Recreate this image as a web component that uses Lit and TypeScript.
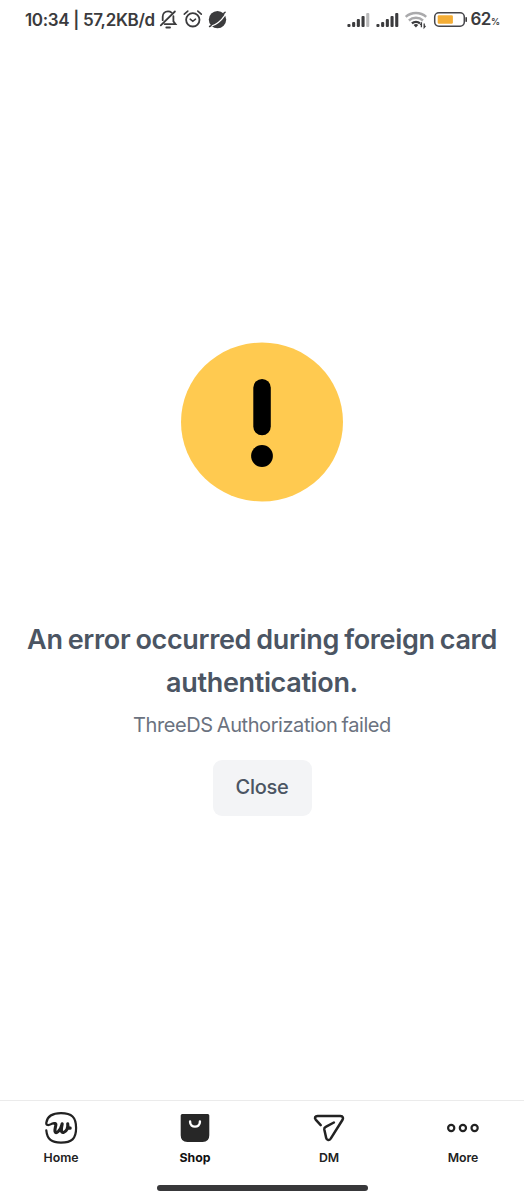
import { LitElement, html, css, svg } from "lit";
import { customElement, property } from "lit/decorators.js";

@customElement("status-bar")
class StatusBar extends LitElement {
  static styles = css`
    :host { display: flex; justify-content: space-between; height: 40px; padding: 0 25px; box-sizing: border-box; color: #3b3b3d; }
    .side { display: flex; align-items: center; height: 40px; }
    .clock { font-size: 17px; font-weight: 600; line-height: 40px; white-space: nowrap; width: 131px; letter-spacing: -0.34px; }
    svg { display: block; flex: none; }
    .pct { font-size: 17px; font-weight: 600; line-height: 40px; margin-left: 3.5px; white-space: nowrap; letter-spacing: -0.4px; }
    .sign { font-size: 9px; letter-spacing: -0.6px; }
    .right { margin-right: -0.5px; }
  `;
  private bars(dimLast: boolean) {
    const heights = [3, 5, 8, 11, 14];
    return svg`${heights.map(
      (h, i) => svg`<rect x=${0.4 + i * 4.7} y=${27 - h} width="3.1" height=${h} rx="1" fill=${dimLast && i === 4 ? "#b9b9ba" : "#3b3b3d"} />`
    )}`;
  }
  render() {
    return html`
      <div class="side">
        <span class="clock">10:34 | 57,2KB/d</span>
        <svg width="74" height="40" viewBox="156 0 74 40" fill="none" stroke="#3b3b3d" stroke-width="1.8" stroke-linecap="round">
          <path d="M171.600 12.600c-1-.8-2.200-1.200-3.600-1.200-3.200 0-5.300 2.200-5.300 5.400v3.400M173.400 16.200v5.200l2.100 2.700H164.600" />
          <path d="M160.800 25.300 174.900 11.500M166.300 27.500h3.700" />
          <circle cx="192.800" cy="19.800" r="6.700" />
          <path d="M190.200 19.200l2.600 2.100 2.700-2.100M184.300 14.200l3.500-3.100M201.300 14.200l-3.500-3.100" stroke-width="1.600" />
          <circle cx="217.500" cy="19.600" r="8.700" fill="#3b3b3d" stroke="none" />
          <path d="M211 26.300c5.200-1.600 10.300-5.700 14-11.200" stroke="#fff" stroke-width="1.200" />
          <path d="M209.600 26.500l1.500-.9M223.800 13.400l1.300-1.100" stroke-width="1.500" />
        </svg>
      </div>
      <div class="side right">
        <svg width="22.500" height="40" viewBox="0 0 22.500 40">${this.bars(true)}</svg>
        <svg width="34" height="40" viewBox="-6 0 34 40">${this.bars(false)}</svg>
        <svg width="63" height="40" viewBox="404 0 63 40" fill="none">
          <g stroke-width="2.400">
            <path d="M405.700 16.900c5.700-5.200 14.800-5.200 20.500 0" stroke="#aaaaac" />
            <path d="M408.900 20.500c4-3.600 10.100-3.600 14.100 0" stroke="#aaaaac" />
            <path d="M411.900 23.400c2.400-2 5.800-2 8.100 0" stroke="#3b3b3d" />
          </g>
          <path d="M413.600 25q2.400-1.800 4.700 0L415.900 27.500z" fill="#3b3b3d" />
          <path d="M421.400 27.300v-4l-1.200 1.500M424.200 23.500v4l1.300-1.600" stroke="#3b3b3d" stroke-width="1.300" />
          <rect x="434.700" y="12.700" width="29.600" height="13.600" rx="4.200" stroke="#45454a" stroke-width="1.500" />
          <rect x="437.700" y="15.300" width="15.200" height="8.400" rx="1.200" fill="#f4ad35" />
          <path d="M466.200 17.700v3.500" stroke="#3b3b3d" stroke-width="1.600" stroke-linecap="round" />
        </svg>
        <span class="pct">62<span class="sign">%</span></span>
      </div>
    `;
  }
}

@customElement("error-panel")
class ErrorPanel extends LitElement {
  static styles = css`
    :host { display: flex; flex-direction: column; align-items: center; padding-top: 302px; text-align: center; }
    .badge { display: block; width: 164px; height: 162px; margin-bottom: 114px; }
    h1 { margin: 0; font-size: 27px; font-weight: 600; line-height: 43px; color: #4b5563; white-space: nowrap; letter-spacing: -0.34px; word-spacing: -1.3px; }
    p { margin: 4px 0 17.5px; font-size: 20px; line-height: 34px; color: #6b7280; font-weight: 400; letter-spacing: -0.43px; word-spacing: -1px; white-space: nowrap; }
    button { width: 99px; height: 56px; padding: 0 0 1px; border: 0; border-radius: 9px; background: #f3f4f6; color: #4b5563; font: 500 20px Inter, sans-serif; letter-spacing: -0.25px; }
  `;
  render() {
    return html`
      <svg class="badge" viewBox="0 0 164 162">
        <ellipse cx="82" cy="80" rx="81" ry="79.500" fill="#ffca50" />
        <rect x="73.300" y="37" width="17.500" height="56.300" rx="8.750" fill="#000" />
        <circle cx="82" cy="114" r="10.900" fill="#000" />
      </svg>
      <h1>An error occurred during foreign card<br />authentication.</h1>
      <p>ThreeDS Authorization failed</p>
      <button>Close</button>
    `;
  }
}

@customElement("nav-item")
class NavItem extends LitElement {
  @property() label = "";
  @property({ type: Boolean }) active = false;
  static styles = css`
    :host { display: flex; flex-direction: column; align-items: center; width: 134px; color: #222; }
    .label { font-size: 12.3px; font-weight: 600; line-height: 16px; margin-top: 4.5px; letter-spacing: -0.05px; }
    .active { font-weight: 700; color: #111; }
  `;
  render() {
    return html`<slot></slot><span class="label ${this.active ? "active" : ""}">${this.label}</span>`;
  }
}

@customElement("app-root")
class AppRoot extends LitElement {
  static styles = css`
    :host { display: flex; flex-direction: column; height: 1200px; background: #fff; font-family: Inter, sans-serif; overflow: hidden; }
    error-panel { flex: 1; }
    nav { height: 100px; box-sizing: border-box; border-top: 1px solid #ebebeb; display: flex; flex-direction: column; align-items: center; }
    .items { display: flex; justify-content: center; width: 536px; height: 84px; padding-top: 8px; box-sizing: border-box; }
    .items svg { display: block; width: 40px; height: 36px; }
    .handle { width: 211px; height: 6px; border-radius: 3px; background: #38383a; }
  `;
  render() {
    return html`
      <status-bar></status-bar>
      <error-panel></error-panel>
      <nav>
        <div class="items">
          <nav-item label="Home">
            <svg viewBox="41 1109 40 36" fill="none" stroke="#222" stroke-linecap="round" stroke-linejoin="round">
              <path stroke-width="2.200" d="M46.300 1130.300C47.200 1139.500 51.600 1142.600 61 1142.600C71.700 1142.600 76.100 1138.800 76.100 1128C76.100 1117 71.700 1113.200 61 1113.200C51.900 1113.200 47.400 1116 46.300 1122.700C45.900 1125.700 48.800 1125.400 51.200 1124.100C52.400 1123.500 53.300 1123.200 54.800 1123.200" />
              <path stroke-width="3.100" d="M54.800 1123.600C56.600 1123.400 55.700 1125.500 55.200 1128.200C54.300 1132.600 55.800 1133.600 58.300 1131.400C60.400 1129.400 61.500 1126.500 62.200 1123.800C60.900 1129.700 60.900 1133 63.500 1132.400C66.900 1131.600 68.300 1127.500 67.700 1123.800C67.700 1126.600 68.300 1128.300 70.200 1128.100" />
            </svg>
          </nav-item>
          <nav-item label="Shop" active>
            <svg viewBox="175 1109 40 36">
              <path fill="#272727" d="M182.200 1114h25.600q1.500 0 1.500 1.500v19.700q0 6.700-6.700 6.700h-15.200q-6.700 0-6.700-6.700v-19.700q0-1.500 1.500-1.500z" />
              <path d="M190.100 1121.400v.6c0 6.200 9.800 6.200 9.800 0v-.6" fill="none" stroke="#fff" stroke-width="2.400" stroke-linecap="round" />
            </svg>
          </nav-item>
          <nav-item label="DM">
            <svg viewBox="309 1109 40 36" fill="none" stroke="#222" stroke-width="2.500" stroke-linecap="round" stroke-linejoin="round">
              <path d="M320.700 1125.100L315.900 1119.900C314 1117.700 315.200 1116.100 317.600 1116.100H340.400C343.200 1116.100 343.500 1118.200 342.400 1120L330.700 1138.600C329.300 1140.700 326.700 1140.400 326.200 1138L324.300 1129.400C324.100 1128 324.500 1127.500 325.700 1126.900L333.900 1122.500" />
            </svg>
          </nav-item>
          <nav-item label="More">
            <svg viewBox="443 1109 40 36" fill="none" stroke="#222" stroke-width="2.200">
              <circle cx="451.200" cy="1128" r="3.100" />
              <circle cx="462.900" cy="1128" r="3.100" />
              <circle cx="474.600" cy="1128" r="3.100" />
            </svg>
          </nav-item>
        </div>
        <div class="handle"></div>
      </nav>
    `;
  }
}
